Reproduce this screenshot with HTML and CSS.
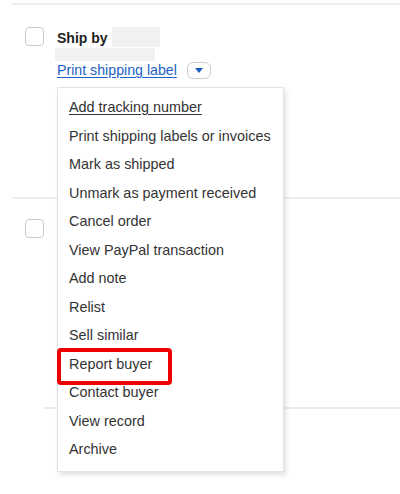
FILE: index.html
```html
<!DOCTYPE html>
<html lang="en">
<head>
<meta charset="utf-8">
<title>Orders</title>
<link rel="stylesheet" href="styles.css">
</head>
<body>
<div class="orders">
  <div class="rule rule-top"></div>

  <div class="order order-first">
    <span class="check"></span>
    <div class="order-body">
      <div class="ship-line">
        <span class="ship-by">Ship by</span>
        <span class="blank blank-date"></span>
      </div>
      <span class="blank blank-sub"></span>
      <div class="actions">
        <a class="action-link" href="#">Print shipping label</a>
        <button class="more-btn" type="button" aria-label="More actions"><span class="caret"></span></button>
      </div>
    </div>

    <ul class="menu">
      <li class="menu-item menu-item-first">Add tracking number</li>
      <li class="menu-item">Print shipping labels or invoices</li>
      <li class="menu-item">Mark as shipped</li>
      <li class="menu-item">Unmark as payment received</li>
      <li class="menu-item">Cancel order</li>
      <li class="menu-item">View PayPal transaction</li>
      <li class="menu-item">Add note</li>
      <li class="menu-item">Relist</li>
      <li class="menu-item">Sell similar</li>
      <li class="menu-item menu-item-marked">Report buyer<span class="mark"></span></li>
      <li class="menu-item">Contact buyer</li>
      <li class="menu-item">View record</li>
      <li class="menu-item">Archive</li>
    </ul>
  </div>

  <div class="rule rule-mid"></div>

  <div class="order order-second">
    <span class="check"></span>
  </div>

  <div class="rule rule-low"></div>
</div>
</body>
</html>
```

FILE: styles.css
```css
* {
  box-sizing: border-box;
}

html, body {
  margin: 0;
  padding: 0;
  background: #ffffff;
}

body {
  width: 400px;
  height: 494px;
  overflow: hidden;
  font-family: "Liberation Sans", Arial, sans-serif;
  font-size: 14px;
  color: #333333;
}

.orders {
  display: flex;
  flex-direction: column;
}

.rule {
  height: 2px;
  background: #ededed;
}

.rule-top {
  margin-top: 3px;
  margin-left: 12px;
}

.rule-mid {
  margin-left: 12px;
}

.rule-low {
  margin-left: 43px;
}

.order {
  position: relative;
  display: flex;
  align-items: flex-start;
  padding-left: 25px;
}

.order-first {
  padding-top: 22px;
  height: 192px;
}

.order-second {
  padding-top: 20px;
  height: 208px;
}

.check {
  flex: none;
  width: 19px;
  height: 19px;
  border: 1.5px solid #c9c9c9;
  border-radius: 4px;
  background: #ffffff;
}

.order-body {
  margin-left: 13px;
  display: flex;
  flex-direction: column;
  align-items: flex-start;
}

.ship-line {
  display: flex;
  align-items: flex-start;
}

.ship-by {
  font-weight: bold;
  font-size: 14px;
  color: #222222;
  line-height: 20px;
  padding-top: 1px;
}

.blank {
  display: block;
  background: #f1f1f3;
}

.blank-date {
  width: 48px;
  height: 20px;
  margin-left: 4px;
}

.blank-sub {
  width: 100px;
  height: 13px;
  margin-left: -2px;
}

.actions {
  display: flex;
  align-items: center;
  margin-top: 0;
}

.action-link {
  color: #1d5fc4;
  font-size: 14.2px;
  text-decoration: underline;
  text-underline-offset: 2px;
  line-height: 18px;
}

.more-btn {
  width: 24px;
  height: 17px;
  margin-left: 10px;
  padding: 0;
  border: 1px solid #cfcfcf;
  border-radius: 6px;
  background: #ffffff;
  display: flex;
  align-items: center;
  justify-content: center;
}

.caret {
  width: 0;
  height: 0;
  border-left: 4.5px solid transparent;
  border-right: 4.5px solid transparent;
  border-top: 5px solid #1a5bbd;
  margin-top: 1px;
}

/* dropdown of order actions, opened over the list */
.menu {
  position: absolute;
  left: 57px;
  top: 82px;
  z-index: 2;
  width: 227px;
  height: 385px;
  margin: 0;
  padding: 5px 0 0;
  list-style: none;
  background: #ffffff;
  border: 1px solid #e3e3e3;
  box-shadow: 2px 3px 5px rgba(0, 0, 0, 0.12);
}

.menu-item {
  position: relative;
  height: 28.5px;
  line-height: 28.5px;
  padding-left: 11px;
  font-size: 14.4px;
  color: #333333;
  white-space: nowrap;
}

.menu-item-first {
  text-decoration: underline;
  text-underline-offset: 2px;
}

.mark {
  position: absolute;
  left: -1px;
  top: -2px;
  width: 115px;
  height: 37px;
  border: 4px solid #ee0000;
  border-radius: 4px;
}
```
